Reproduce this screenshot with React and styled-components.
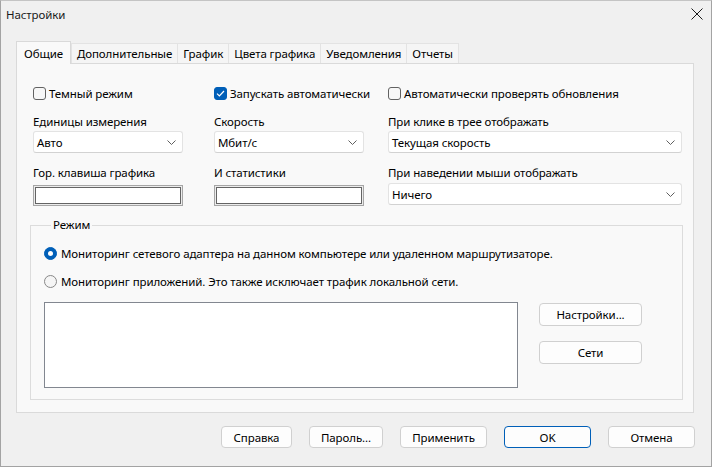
import React from 'react';
import styled, { createGlobalStyle } from 'styled-components';

const GlobalStyle = createGlobalStyle`
  html, body {
    margin: 0;
    padding: 0;
    background: #f0f0f0;
  }
  body {
    font-family: 'Segoe UI', 'Noto Sans', sans-serif;
    font-size: 11.5px;
    letter-spacing: -0.1px;
    color: #000;
  }
  * { box-sizing: border-box; }
`;

const Window = styled.div`
  width: 712px;
  height: 467px;
  border: 1px solid #a3a3a3;
  border-top-color: #c4c4c4;
  background: #f0f0f0;
  display: flex;
  flex-direction: column;
`;

const TitleBar = styled.div`
  height: 26px;
  display: flex;
  align-items: center;
  justify-content: space-between;
  padding: 0 8px 0 5px;
`;

const Title = styled.span`
  color: #1a1a1a;
`;

const CloseIcon = styled.svg`
  width: 12px;
  height: 12px;
  display: block;
`;

const TabStrip = styled.div`
  display: flex;
  align-items: flex-end;
  height: 22px;
  margin-top: 14px;
  padding-left: 15px;
`;

const Tab = styled.div`
  position: relative;
  height: ${p => (p.$active ? '23px' : '20px')};
  margin-bottom: ${p => (p.$active ? '-1px' : '0')};
  padding: ${p => (p.$active ? '0 7px' : '0 5px')};
  display: flex;
  align-items: center;
  background: ${p => (p.$active ? '#f9f9f9' : '#f5f5f5')};
  border: 1px solid ${p => (p.$active ? '#d9d9d9' : '#e3e3e3')};
  border-bottom: none;
  border-left: ${p => (p.$active || p.$first ? undefined : 'none')};
  z-index: ${p => (p.$active ? 1 : 0)};
  white-space: nowrap;
`;

const Panel = styled.div`
  height: 350px;
  margin: 0 17px 0 15px;
  border: 1px solid #dadada;
  background: #f9f9f9;
  padding-top: 21px;
  display: flex;
  flex-direction: column;
`;

const Grid = styled.div`
  display: grid;
  grid-template-columns: 181px 174px 294px;
  row-gap: 12px;
  padding-left: 16px;
`;

const CheckRow = styled.label`
  height: 17px;
  display: flex;
  align-items: center;
  gap: 3px;
  white-space: nowrap;
`;

const Box = styled.span`
  width: 13px;
  height: 13px;
  border-radius: 3px;
  border: 1px solid ${p => (p.$checked ? '#005fb8' : '#626262')};
  background: ${p => (p.$checked ? '#005fb8' : '#f7f7f7')};
  display: flex;
  align-items: center;
  justify-content: center;
  flex: none;
`;

const Field = styled.div`
  display: flex;
  flex-direction: column;
`;

const FieldLabel = styled.div`
  height: 16px;
  line-height: 16px;
  white-space: nowrap;
`;

const Select = styled.div`
  margin-top: ${p => p.$offset || 1}px;
  width: ${p => p.$width}px;
  height: 22px;
  background: #fff;
  border: 1px solid #e3e3e3;
  border-bottom-color: #d2d2d2;
  border-radius: 3px;
  display: flex;
  align-items: center;
  justify-content: space-between;
  padding: 0 6px 0 3px;
`;

const TextBox = styled.div`
  margin-top: 4px;
  width: 150px;
  height: 21px;
  background: #fff;
  border: 1px solid #a6a6a6;
  box-shadow: inset 0 0 0 1px #ececec, inset 0 0 0 2px #646464;
`;

const GroupBox = styled.fieldset`
  margin: 12px 10px 0 13px;
  padding: 13px 0 11px 13px;
  border: 1px solid #dcdcdc;
  min-width: 0;
`;

const Legend = styled.legend`
  margin-left: 7px;
  padding: 0 2px;
  line-height: 14px;
`;

const RadioRow = styled.label`
  height: 16px;
  display: flex;
  align-items: center;
  gap: 4px;
  margin-bottom: ${p => p.$gap}px;
  white-space: nowrap;
`;

const RadioDot = styled.span`
  width: 13px;
  height: 13px;
  border-radius: 50%;
  flex: none;
  background: ${p => (p.$checked ? '#005fb8' : '#f5f5f5')};
  border: 1px solid ${p => (p.$checked ? '#005fb8' : '#888')};
  display: flex;
  align-items: center;
  justify-content: center;
  &::after {
    content: '';
    display: ${p => (p.$checked ? 'block' : 'none')};
    width: 5px;
    height: 5px;
    border-radius: 50%;
    background: #fff;
  }
`;

const ListRow = styled.div`
  display: flex;
  align-items: flex-start;
  gap: 21px;
`;

const ListBox = styled.div`
  width: 474px;
  height: 86px;
  background: #fff;
  border: 1px solid #828790;
`;

const SideButtons = styled.div`
  padding-top: 1px;
  display: flex;
  flex-direction: column;
  gap: 15px;
`;

const Button = styled.button`
  width: ${p => p.$width}px;
  height: ${p => p.$height || 23}px;
  font: inherit;
  letter-spacing: inherit;
  color: #000;
  background: #fdfdfd;
  border: 1px solid ${p => (p.$default ? '#005fb8' : '#d0d0d0')};
  border-radius: 4px;
  padding: 0;
  cursor: default;
`;

const Footer = styled.div`
  display: flex;
  justify-content: flex-end;
  gap: 17px;
  margin-top: 13px;
  padding-right: 16px;
`;

const Chevron = () => (
  <svg width="9" height="5" viewBox="0 0 9 5">
    <path d="M0.5 0.5 L4.5 4.5 L8.5 0.5" fill="none" stroke="#5f5f5f" strokeWidth="1" />
  </svg>
);

const Check = () => (
  <svg width="9" height="7" viewBox="0 0 9 7">
    <path d="M1 3.6 L3.4 6 L8 1" fill="none" stroke="#fff" strokeWidth="1.2" />
  </svg>
);

const tabs = ['Общие', 'Дополнительные', 'График', 'Цвета графика', 'Уведомления', 'Отчеты'];

export default function App() {
  return (
    <>
      <GlobalStyle />
      <Window>
        <TitleBar>
          <Title>Настройки</Title>
          <CloseIcon viewBox="0 0 12 12">
            <path d="M0.5 0.5 L11.5 11.5 M11.5 0.5 L0.5 11.5" stroke="#1a1a1a" strokeWidth="1" />
          </CloseIcon>
        </TitleBar>

        <TabStrip>
          {tabs.map((t, i) => (
            <Tab key={t} $active={i === 0} $first={i === 1}>{t}</Tab>
          ))}
        </TabStrip>

        <Panel>
          <Grid>
            <CheckRow><Box />Темный режим</CheckRow>
            <CheckRow><Box $checked><Check /></Box>Запускать автоматически</CheckRow>
            <CheckRow><Box />Автоматически проверять обновления</CheckRow>

            <Field>
              <FieldLabel>Единицы измерения</FieldLabel>
              <Select $width={150}>Авто<Chevron /></Select>
            </Field>
            <Field>
              <FieldLabel>Скорость</FieldLabel>
              <Select $width={150}>Мбит/с<Chevron /></Select>
            </Field>
            <Field>
              <FieldLabel>При клике в трее отображать</FieldLabel>
              <Select $width={294}>Текущая скорость<Chevron /></Select>
            </Field>

            <Field>
              <FieldLabel>Гор. клавиша графика</FieldLabel>
              <TextBox />
            </Field>
            <Field>
              <FieldLabel>И статистики</FieldLabel>
              <TextBox />
            </Field>
            <Field>
              <FieldLabel>При наведении мыши отображать</FieldLabel>
              <Select $width={294} $offset={2}>Ничего<Chevron /></Select>
            </Field>
          </Grid>

          <GroupBox>
            <Legend>Режим</Legend>
            <RadioRow $gap={12}>
              <RadioDot $checked />
              Мониторинг сетевого адаптера на данном компьютере или удаленном маршрутизаторе.
            </RadioRow>
            <RadioRow $gap={13}>
              <RadioDot />
              Мониторинг приложений. Это также исключает трафик локальной сети.
            </RadioRow>
            <ListRow>
              <ListBox />
              <SideButtons>
                <Button $width={103}>Настройки...</Button>
                <Button $width={103}>Сети</Button>
              </SideButtons>
            </ListRow>
          </GroupBox>
        </Panel>

        <Footer>
          <Button $width={71} $height={22}>Справка</Button>
          <Button $width={74} $height={22}>Пароль...</Button>
          <Button $width={87} $height={22}>Применить</Button>
          <Button $width={87} $height={22} $default>OK</Button>
          <Button $width={87} $height={22}>Отмена</Button>
        </Footer>
      </Window>
    </>
  );
}
